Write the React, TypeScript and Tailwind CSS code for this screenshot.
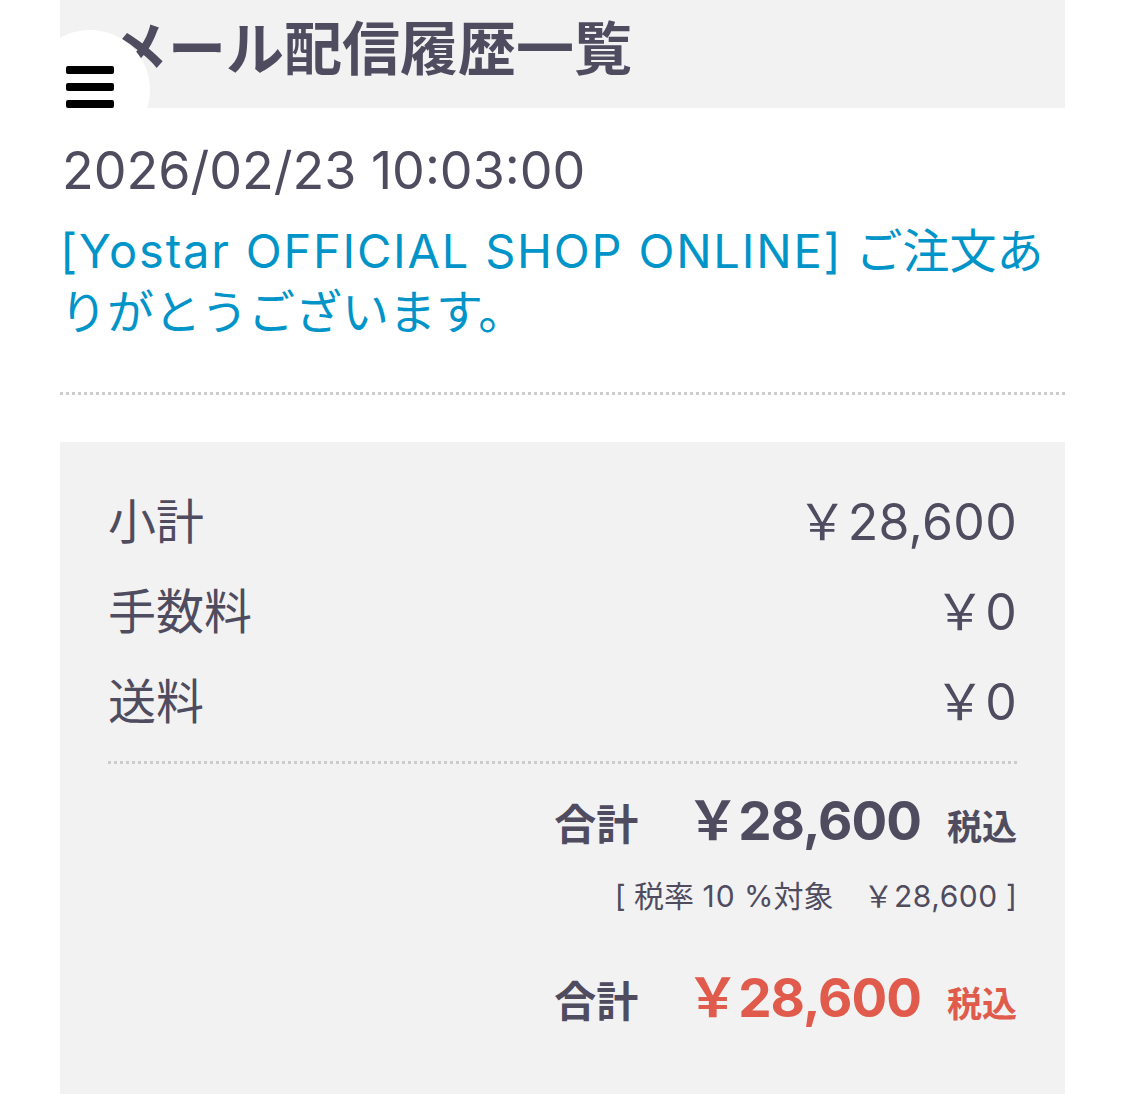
const ink = 'text-[#4f4c60]';

/**
 * Order total block: label, amount and tax note on one baseline
 */
function TotalRow({ red }: { red?: boolean }) {
  const tone = red ? 'text-[#e05b4b]' : ink;
  return (
    <div className="flex items-baseline justify-end">
      <span className={`text-[42px] font-bold ${ink}`}>合計</span>
      <span className={`ml-[48px] text-[53px] font-bold tracking-[-1px] ${tone}`}>￥28,600</span>
      <span className={`ml-[26px] text-[35px] font-bold ${tone}`}>税込</span>
    </div>
  );
}

function LineItem({ label, price }: { label: string; price: string }) {
  return (
    <div className="flex h-[90px] items-center justify-between">
      <span className="text-[48px]">{label}</span>
      <span className="text-[50px] tracking-[0.3px]">{price}</span>
    </div>
  );
}

export default function App() {
  return (
    <div className="relative min-h-screen bg-white font-['Inter','Noto_Sans_CJK_JP',sans-serif]">
      {/* Floating menu button */}
      <button
        type="button"
        aria-label="Open menu"
        className="absolute left-[30px] top-[30px] z-10 flex h-[120px] w-[120px] flex-col items-center justify-center gap-[9px] rounded-full bg-white pb-[6px]"
      >
        <span className="h-[8px] w-[48px] rounded-[2px] bg-black" />
        <span className="h-[8px] w-[48px] rounded-[2px] bg-black" />
        <span className="h-[8px] w-[48px] rounded-[2px] bg-black" />
      </button>

      <div className="ml-[60px] w-[1005px]">
        <div className="h-[108px] bg-[#f2f2f2] pl-[50px] pt-[20px]">
          <h1 className={`text-[58px] font-bold leading-none ${ink}`}>メール配信履歴一覧</h1>
        </div>

        <div className="pt-[31px]">
          <p className={`pl-[2px] text-[52px] leading-[64px] ${ink}`}>2026/02/23 10:03:00</p>
          <a href="#" className="mt-[17px] block text-[47px] leading-[61px] text-[#0094c8]">
            <span className="tracking-[1.8px]">[Yostar OFFICIAL SHOP ONLINE]</span> ご注文あ
            <br />
            りがとうございます。
          </a>
        </div>

        <div className="mt-[50px] border-t-[3px] border-dotted border-[#cccccc]" />

        <div className={`mt-[47px] bg-[#f2f2f2] px-[48px] pb-[80px] pt-[35px] ${ink}`}>
          <LineItem label="小計" price="￥28,600" />
          <LineItem label="手数料" price="￥0" />
          <LineItem label="送料" price="￥0" />

          <div className="mt-[14px] border-t-[3px] border-dotted border-[#cccccc]" />

          <div className="pt-[18px]">
            <TotalRow />
          </div>
          <p className="mt-[12px] text-right text-[30px]">
            [ 税率 <span className="tracking-[1px]">10</span> %対象　<span className="tracking-[0.5px]">￥28,600</span> ]
          </p>
          <div className="pt-[40px]">
            <TotalRow red />
          </div>
        </div>
      </div>
    </div>
  );
}
